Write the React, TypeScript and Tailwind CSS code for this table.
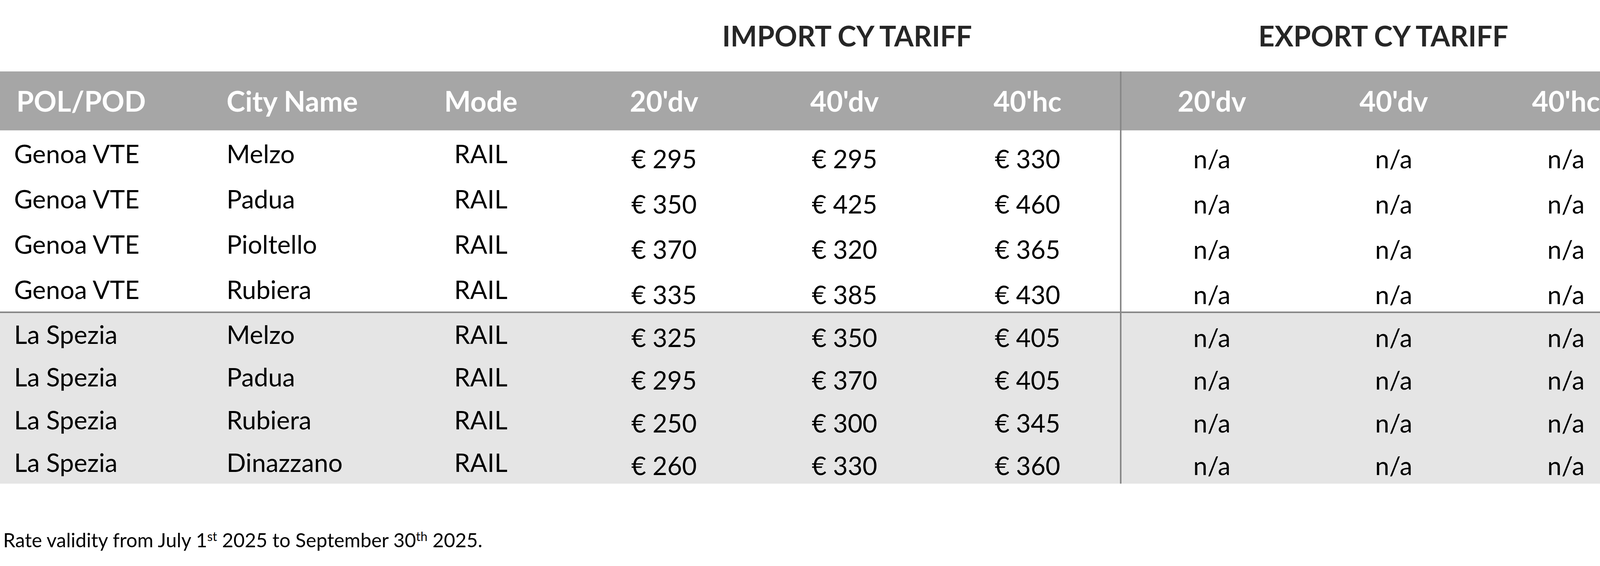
import React from "react";

const upper = [
  ["Genoa VTE", "Melzo", "RAIL", "€ 295", "€ 295", "€ 330"],
  ["Genoa VTE", "Padua", "RAIL", "€ 350", "€ 425", "€ 460"],
  ["Genoa VTE", "Pioltello", "RAIL", "€ 370", "€ 320", "€ 365"],
  ["Genoa VTE", "Rubiera", "RAIL", "€ 335", "€ 385", "€ 430"],
];
const lower = [
  ["La Spezia", "Melzo", "RAIL", "€ 325", "€ 350", "€ 405"],
  ["La Spezia", "Padua", "RAIL", "€ 295", "€ 370", "€ 405"],
  ["La Spezia", "Rubiera", "RAIL", "€ 250", "€ 300", "€ 345"],
  ["La Spezia", "Dinazzano", "RAIL", "€ 260", "€ 330", "€ 360"],
];

const cols =
  "grid grid-cols-[540px_452px_478px_460px_464px_473px_467px_468px_414px]";

function Row({ r, upperGroup }: { r: string[]; upperGroup: boolean }) {
  const h = upperGroup ? "h-[116px]" : "h-[109.25px]";
  const nameTop = upperGroup ? "pt-[27px]" : "pt-[22px]";
  const numTop = upperGroup ? "pt-[40px]" : "pt-[30px]";
  return (
    <div className={`${cols} ${h} text-[65px] leading-none text-black`}>
      <div className={`${nameTop} pl-[36px] whitespace-nowrap`}>{r[0]}</div>
      <div className={`${nameTop} pl-[40px] whitespace-nowrap`}>{r[1]}</div>
      <div className={`${nameTop} text-center`}>{r[2]}</div>
      <div className={`${numTop} text-center whitespace-nowrap`}>{r[3]}</div>
      <div className={`${numTop} text-center whitespace-nowrap`}>{r[4]}</div>
      <div className={`${numTop} text-center whitespace-nowrap`}>{r[5]}</div>
      <div className={`${numTop} text-center border-l-4 border-[#888888]`}>n/a</div>
      <div className={`${numTop} text-center`}>n/a</div>
      <div className={`${numTop} text-center`}>n/a</div>
    </div>
  );
}

export default function App() {
  return (
    <div className="w-[4216px] h-[1450px] bg-white font-['Lato',sans-serif] overflow-hidden">
      <div className={`${cols} h-[183px] text-[72px] font-bold leading-none text-[#262626]`}>
        <div className="col-span-3" />
        <div className="col-span-3 pt-[55px] text-center whitespace-nowrap">IMPORT CY TARIFF</div>
        <div className="col-span-3 pt-[55px] text-center whitespace-nowrap">EXPORT CY TARIFF</div>
      </div>
      <div className={`${cols} h-[151px] bg-[#a6a6a6] text-white text-[72px] font-bold leading-none`}>
        <div className="pt-[39px] pl-[42px] whitespace-nowrap">POL/POD</div>
        <div className="pt-[39px] pl-[40px] whitespace-nowrap">City Name</div>
        <div className="pt-[39px] text-center">Mode</div>
        <div className="pt-[39px] text-center">20'dv</div>
        <div className="pt-[39px] text-center">40'dv</div>
        <div className="pt-[39px] text-center">40'hc</div>
        <div className="pt-[39px] text-center border-l-4 border-[#888888]">20'dv</div>
        <div className="pt-[39px] text-center">40'dv</div>
        <div className="pt-[39px] text-center">40'hc</div>
      </div>
      {upper.map((r, i) => (
        <Row key={i} r={r} upperGroup />
      ))}
      <div className="h-[4px] bg-[#888888]" />
      <div className="bg-[#e5e5e5]">
        {lower.map((r, i) => (
          <Row key={i} r={r} upperGroup={false} />
        ))}
      </div>
      <div className="mt-[119px] pl-[8px] text-[50px] leading-none text-black whitespace-nowrap">
        Rate validity from July 1<sup className="text-[32px]">st</sup> 2025 to September 30
        <sup className="text-[32px]">th</sup> 2025.
      </div>
    </div>
  );
}
